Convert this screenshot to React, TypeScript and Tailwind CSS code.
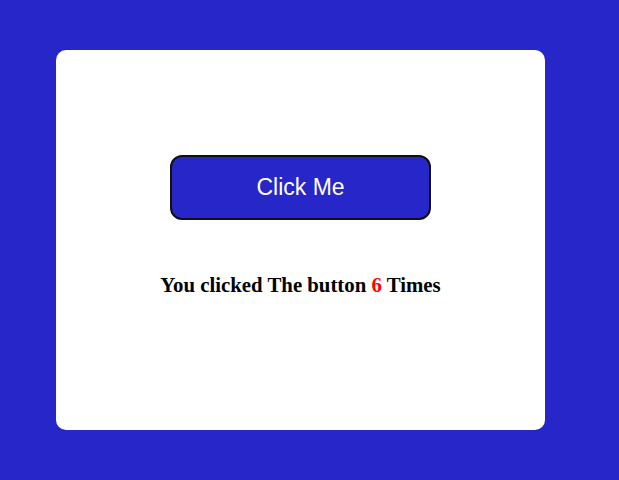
import { useState } from 'react'

export default function App() {
  const [count, setCount] = useState(6)

  return (
    <div className="min-h-screen w-full bg-[#2626c9] pl-[56px] pt-[50px]">
      {/* 白色卡片 */}
      <div className="flex h-[380px] w-[489px] flex-col items-center rounded-[10px] bg-white pt-[105px]">
        <button
          onClick={() => setCount(count + 1)}
          className="h-[65px] w-[261px] rounded-[12px] border-2 border-[#111] bg-[#2626c9] text-[23px] text-white font-['Liberation_Sans',Arial,sans-serif]"
        >
          Click Me
        </button>

        {/* 點擊次數 */}
        <h2 className="mt-[53px] text-[20.8px] font-bold leading-[24px] text-black font-['Liberation_Serif','Times_New_Roman',serif]">
          You clicked The button <span className="text-[#ff0000]">{count}</span> Times
        </h2>
      </div>
    </div>
  )
}
